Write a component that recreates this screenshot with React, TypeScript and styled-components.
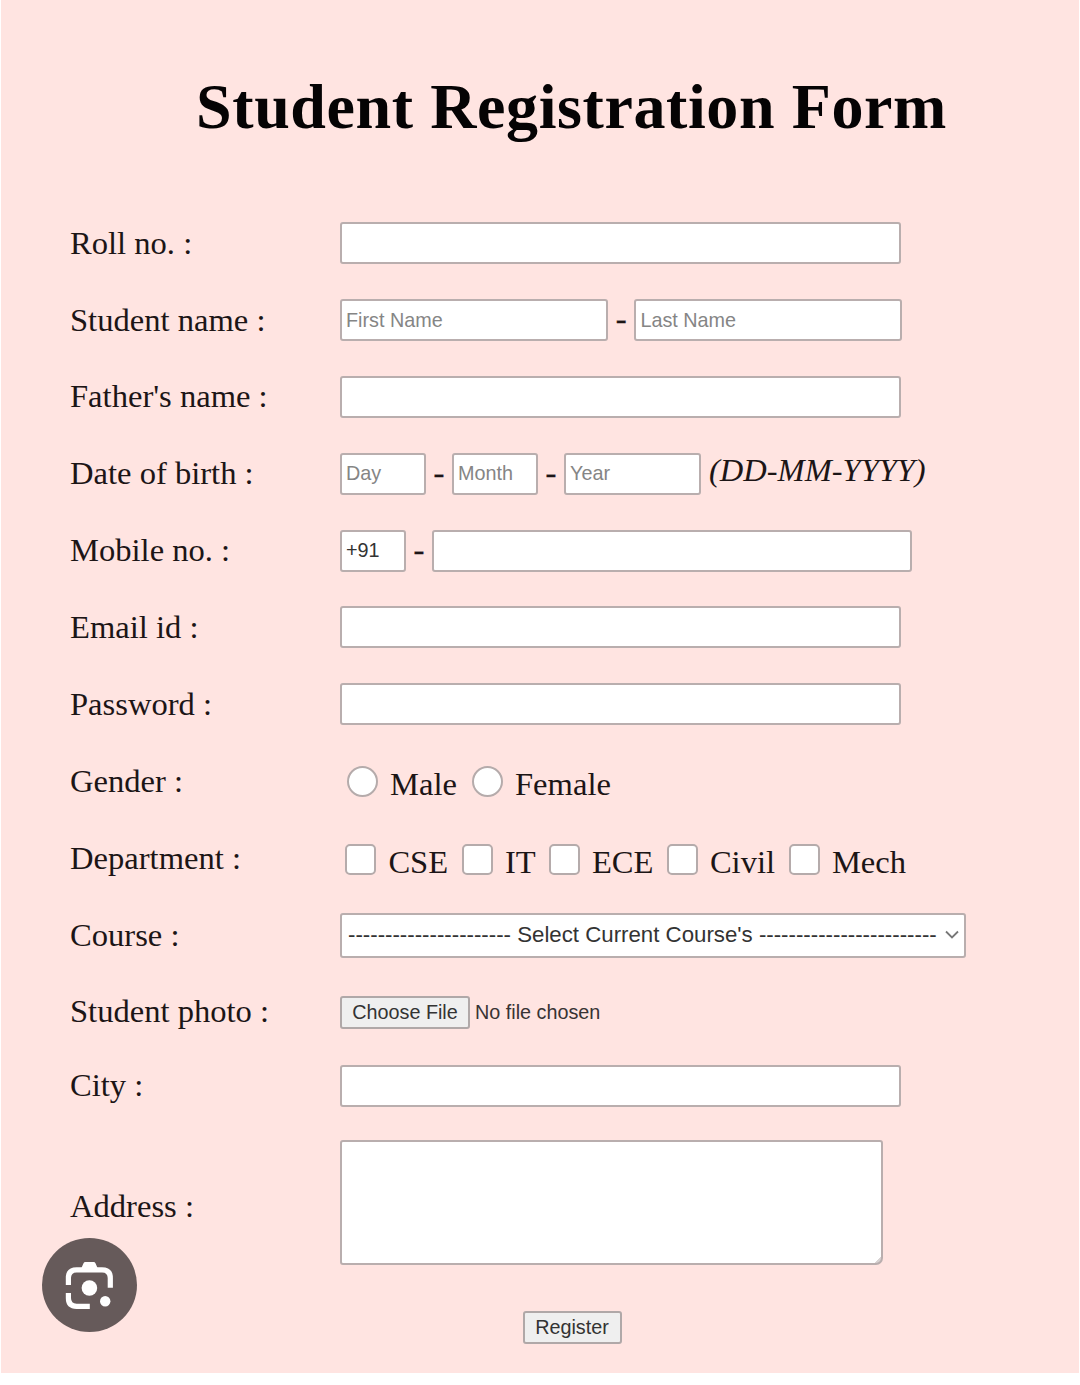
import React from "react";
import styled, { createGlobalStyle } from "styled-components";

const SERIF = `"Liberation Serif", "Times New Roman", serif`;
const SANS = `"Liberation Sans", Arial, sans-serif`;

const GlobalStyle = createGlobalStyle`
  *, *::before, *::after { box-sizing: border-box; }
  body { margin: 0; background: #fff; }
`;

const Page = styled.main`
  position: relative;
  width: 1078px;
  height: 1373px;
  margin: 0 1px;
  padding: 66px 0 0 69px;
  background: #ffe4e1;
  color: #1c1516;
  font-family: ${SERIF};
  font-size: 32.6px;
  overflow: hidden;
`;

const Title = styled.h1`
  width: 1003px;
  height: 139px;
  margin: 0;
  color: #050304;
  font-size: 64px;
  font-weight: 700;
  line-height: 82px;
  letter-spacing: 0.6px;
  text-align: center;
  white-space: nowrap;
`;

const Row = styled.div<{ $height?: number }>`
  display: grid;
  grid-template-columns: 270px 1fr;
  align-items: center;
  height: ${(p) => p.$height ?? 76.8}px;
`;

const Label = styled.label<{ $shift?: number }>`
  margin-top: ${(p) => (p.$shift ?? 0) * 2}px;
  line-height: 36px;
  white-space: nowrap;
`;

const Field = styled.div`
  display: flex;
  align-items: center;
  white-space: nowrap;
`;

const Input = styled.input<{ $width?: number }>`
  width: ${(p) => p.$width ?? 561}px;
  height: 42px;
  padding: 0 4px;
  border: 2px solid #b9aeae;
  border-radius: 3px;
  outline: none;
  background: #fff;
  color: #333;
  font-family: ${SANS};
  font-size: 19.8px;
  &::placeholder { color: #858585; opacity: 1; }
`;

const Dash = styled.span<{ $width?: number }>`
  width: ${(p) => p.$width ?? 27}px;
  padding-bottom: 4px;
  line-height: 36px;
  text-align: center;
  -webkit-text-stroke: 0.4px currentColor;
`;

const Hint = styled.em`
  margin-left: 8px;
  padding-bottom: 8px;
  font-size: 32.5px;
  line-height: 36px;
`;

const Choices = styled.div<{ $indent: number; $shift?: number }>`
  display: flex;
  margin-top: ${(p) => (p.$shift ?? 0) * 2}px;
  padding-left: ${(p) => p.$indent}px;
`;

const Choice = styled.label<{ $width: number; $gap: number }>`
  display: flex;
  align-items: center;
  gap: ${(p) => p.$gap}px;
  width: ${(p) => p.$width}px;
  line-height: 36px;
  white-space: nowrap;
`;

const ChoiceText = styled.span`
  padding-top: 6px;
`;

const Tick = styled.input`
  appearance: none;
  flex: none;
  width: 31px;
  height: 31px;
  margin: 0;
  border: 2px solid #b5abab;
  border-radius: ${(p) => (p.type === "radio" ? "50%" : "5px")};
  background: #fff;
`;

const SelectBox = styled.button`
  display: flex;
  align-items: center;
  justify-content: space-between;
  width: 626px;
  height: 45px;
  padding: 0 5px 0 6px;
  border: 2px solid #b9aeae;
  border-radius: 3px;
  background: #fff;
  color: #333;
  font-family: ${SANS};
  font-size: 22.25px;
  white-space: nowrap;
`;

const Button = styled.button<{ $width: number; $height: number }>`
  width: ${(p) => p.$width}px;
  height: ${(p) => p.$height}px;
  padding: 1px 0 0;
  border: 2px solid #b0a8a8;
  border-radius: 3px;
  background: #efefef;
  color: #333;
  font-family: ${SANS};
  font-size: 19.8px;
  white-space: nowrap;
`;

const FileName = styled.span`
  margin-left: 5px;
  padding-top: 1px;
  color: #383334;
  font-family: ${SANS};
  font-size: 19.8px;
`;

const AddressBox = styled.textarea`
  display: block;
  width: 543px;
  height: 125px;
  margin-top: 1px;
  border: 2px solid #b9aeae;
  border-radius: 3px 3px 7px 3px;
  outline: none;
  resize: none;
  background: linear-gradient(135deg, transparent 50%, #d8d3d3 50%) right bottom / 7px 7px no-repeat #fff;
`;

const Actions = styled.div`
  display: flex;
  justify-content: center;
  width: 1004px;
  padding-top: 29px;
`;

const LensButton = styled.button`
  position: absolute;
  left: 41px;
  top: 1238px;
  width: 95px;
  height: 94px;
  padding: 0;
  border: 0;
  border-radius: 50%;
  background: #665a5a;
  svg { display: block; }
`;

const departments: [string, number][] = [
  ["CSE", 116.5],
  ["IT", 87],
  ["ECE", 118],
  ["Civil", 122],
  ["Mech", 120],
];

export default function App() {
  return (
    <>
      <GlobalStyle />
      <Page>
        <Title>Student Registration Form</Title>
        <Row><Label>Roll no. :</Label><Field><Input /></Field></Row>
        <Row>
          <Label>Student name :</Label>
          <Field>
            <Input $width={268} placeholder="First Name" />
            <Dash $width={26.4}>-</Dash>
            <Input $width={268} placeholder="Last Name" />
          </Field>
        </Row>
        <Row><Label $shift={-1}>Father's name :</Label><Field><Input /></Field></Row>
        <Row>
          <Label $shift={-1}>Date of birth :</Label>
          <Field>
            <Input $width={86} placeholder="Day" />
            <Dash $width={26}>-</Dash>
            <Input $width={86} placeholder="Month" />
            <Dash $width={26}>-</Dash>
            <Input $width={137} placeholder="Year" />
            <Hint>(DD-MM-YYYY)</Hint>
          </Field>
        </Row>
        <Row>
          <Label $shift={-1}>Mobile no. :</Label>
          <Field>
            <Input $width={66} defaultValue="+91" />
            <Dash $width={26}>-</Dash>
            <Input $width={480} />
          </Field>
        </Row>
        <Row><Label>Email id :</Label><Field><Input type="email" /></Field></Row>
        <Row><Label>Password :</Label><Field><Input type="password" /></Field></Row>
        <Row $height={77.4}>
          <Label>Gender :</Label>
          <Choices $indent={7}>
            <Choice $width={125} $gap={12}><Tick type="radio" name="gender" /><ChoiceText>Male</ChoiceText></Choice>
            <Choice $width={140} $gap={12}><Tick type="radio" name="gender" /><ChoiceText>Female</ChoiceText></Choice>
          </Choices>
        </Row>
        <Row $height={77}>
          <Label>Department :</Label>
          <Choices $indent={5.4} $shift={1}>
            {departments.map(([name, width]) => (
              <Choice key={name} $width={width} $gap={12}>
                <Tick type="checkbox" />
                <ChoiceText>{name}</ChoiceText>
              </Choice>
            ))}
          </Choices>
        </Row>
        <Row $height={77}>
          <Label>Course :</Label>
          <SelectBox type="button">
            <span>{"-".repeat(22)} Select Current Course's {"-".repeat(24)}</span>
            <svg width="14" height="10" viewBox="0 0 14 10" fill="none" stroke="#777" strokeWidth="1.8">
              <path d="M1 1.5 7 7.5 13 1.5" />
            </svg>
          </SelectBox>
        </Row>
        <Row $height={77}>
          <Label $shift={-1}>Student photo :</Label>
          <Field>
            <Button type="button" $width={130} $height={33}>Choose File</Button>
            <FileName>No file chosen</FileName>
          </Field>
        </Row>
        <Row $height={71}><Label $shift={-1}>City :</Label><Field><Input /></Field></Row>
        <Row $height={160}><Label $shift={4.5}>Address :</Label><AddressBox /></Row>
        <Actions><Button type="submit" $width={99} $height={33}>Register</Button></Actions>
        <LensButton type="button" aria-label="Search inside image">
          <svg width="95" height="94" viewBox="42 1238 95 94" fill="none">
            <g stroke="#fff" strokeWidth="5.2">
              <path d="M68.4 1285V1278Q68.4 1269.8 76.6 1269.8H102Q110.3 1269.8 110.3 1278V1287.8" />
              <path d="M68.4 1293V1298Q68.4 1306.3 76.6 1306.3H89.8" />
            </g>
            <path fill="#fff" d="M81 1269 83.4 1263.4Q84 1262 85.4 1262H93.6Q95 1262 95.6 1263.4L98 1269Z" />
            <circle cx="89.4" cy="1288" r="7.8" fill="#fff" />
            <circle cx="105.2" cy="1301.2" r="5.2" fill="#fff" />
          </svg>
        </LensButton>
      </Page>
    </>
  );
}
